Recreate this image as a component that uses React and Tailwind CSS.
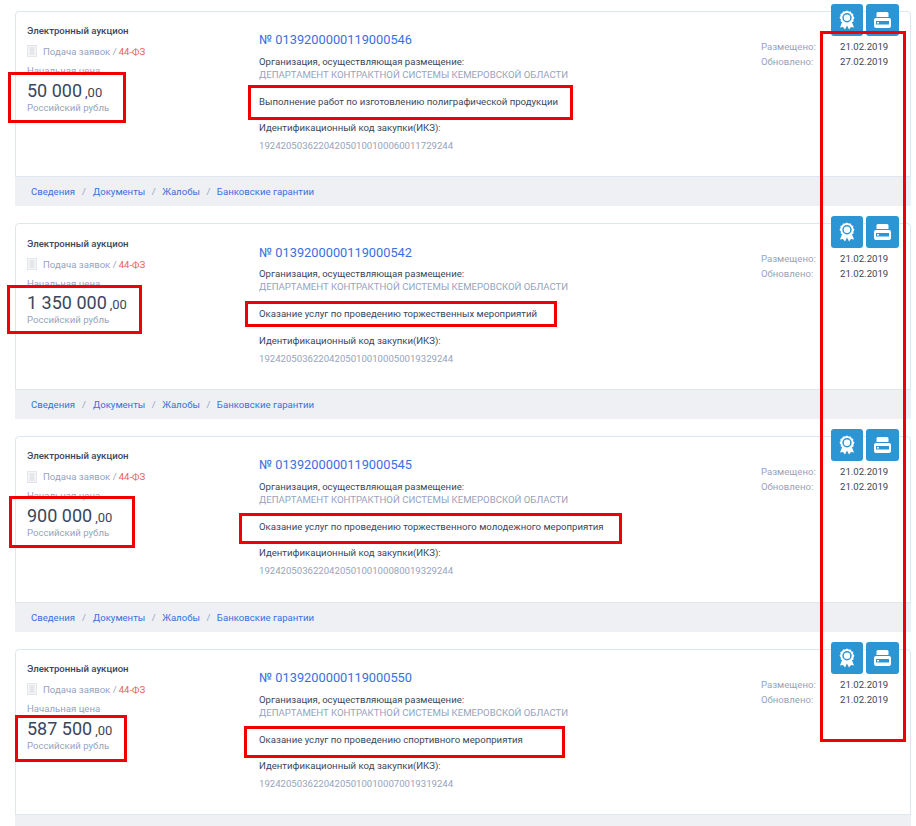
const cards = [
  { num: "0139200000119000546", price: "50 000", desc: "Выполнение работ по изготовлению полиграфической продукции", ikz: "192420503622042050100100060011729244", upd: "27.02.2019" },
  { num: "0139200000119000542", price: "1 350 000", desc: "Оказание услуг по проведению торжественных мероприятий", ikz: "192420503622042050100100050019329244", upd: "21.02.2019" },
  { num: "0139200000119000545", price: "900 000", desc: "Оказание услуг по проведению торжественного молодежного мероприятия", ikz: "192420503622042050100100080019329244", upd: "21.02.2019" },
  { num: "0139200000119000550", price: "587 500", desc: "Оказание услуг по проведению спортивного мероприятия", ikz: "192420503622042050100100070019319244", upd: "21.02.2019" },
];

const marks = [
  "left-[8px] top-[72px] w-[118px] h-[51px]",
  "left-[248px] top-[85px] w-[325px] h-[35px]",
  "left-[7px] top-[285px] w-[135px] h-[49px]",
  "left-[245px] top-[301px] w-[312px] h-[26px]",
  "left-[9px] top-[496px] w-[126px] h-[52px]",
  "left-[239px] top-[513px] w-[383px] h-[31px]",
  "left-[15px] top-[715px] w-[112px] h-[47px]",
  "left-[244px] top-[726px] w-[321px] h-[32px]",
  "left-[820px] top-[31px] w-[86px] h-[711px]",
];

function Award() {
  return (
    <svg width="16" height="20" viewBox="0 0 16 20" fill="none">
      <path d="M3.500 11 1 17.500l3-.4L6 19.500 8 15.500l2 4 2-2.400 3 .4L12.500 11z" fill="white" />
      <path d="M8 .5l1.700 1.100 2-.2.800 1.800 1.800.8-.2 2L15.500 7.700l-1.100 1.700.2 2-1.800.8-.8 1.800-2-.2L8 14.900l-1.700-1.100-2 .2-.8-1.800-1.800-.8.2-2L.5 7.700l1.100-1.700-.2-2 1.800-.8.800-1.800 2 .2z" fill="white" />
      <circle cx="8" cy="7.700" r="4.700" fill="#2b96d3" />
      <circle cx="8" cy="7.700" r="3.200" fill="white" />
    </svg>
  );
}

function Printer() {
  return (
    <svg width="17" height="16" viewBox="0 0 17 16" fill="white">
      <path d="M4 0h9a1.500 1.500 0 0 1 1.500 1.500V5h-12V1.500A1.500 1.500 0 0 1 4 0z" />
      <path fillRule="evenodd" d="M2 6h13a2 2 0 0 1 2 2v6a2 2 0 0 1-2 2H2a2 2 0 0 1-2-2V8a2 2 0 0 1 2-2zM2 9v3.500h13V9z" />
      <rect x="3" y="10" width="2" height="1.500" />
    </svg>
  );
}

function Doc() {
  return (
    <svg width="10" height="12" viewBox="0 0 10 12" fill="none">
      <rect x="0.500" y="0.500" width="9" height="11" fill="#f5f6f7" stroke="#e3e6ea" />
      <path d="M2.500 3h5M2.500 5h5M2.500 7h5M2.500 9h5" stroke="#d5d8dc" />
    </svg>
  );
}

function Card({ c }) {
  return (
    <div className="relative h-[195.67px] mb-[17px] bg-white border border-[#dfe6ef] rounded-t-[4px] flex flex-col">
      <div className="absolute right-[11px] top-[-8px] flex gap-[3px]">
        <div className="w-[32px] h-[32px] rounded-[3px] bg-[#2b96d3] flex items-center justify-center"><Award /></div>
        <div className="w-[33px] h-[32px] rounded-[3px] bg-[#2b96d3] flex items-center justify-center"><Printer /></div>
      </div>
      <div className="flex-1 flex min-h-0">
        <div className="w-[243px] shrink-0 pl-[11px] pt-[12.4px]">
          <div className="text-[9.6px] leading-[13px] font-medium text-[#3a465c]">Электронный аукцион</div>
          <div className="mt-[8px] flex items-center text-[9.6px] leading-[13px] text-[#97a3bb]">
            <Doc />
            <span className="ml-[6px]">Подача заявок / </span>
            <span className="ml-[2px] text-[#ea5f53]">44-ФЗ</span>
          </div>
          <div className="mt-[6px] text-[9.6px] leading-[13px] text-[#97a3bb]">Начальная цена</div>
          <div className="text-[#3a465c] leading-[22px] mt-[2.6px]">
            <span className="text-[18px]">{c.price}</span>
            <span className="text-[13px] ml-[3px]">,00</span>
          </div>
          <div className="mt-[-3px] text-[9.6px] leading-[13px] text-[#97a3bb]">Российский рубль</div>
        </div>
        <div className="flex-1 pt-[19.4px]">
          <div className="text-[12.8px] leading-[18px] text-[#3a6fe0]">№ {c.num}</div>
          <div className="mt-[5.6px] text-[9.6px] leading-[13px] text-[#3a465c]">Организация, осуществляющая размещение:</div>
          <div className="text-[9.6px] leading-[13px] text-[#97a3bb] whitespace-nowrap">ДЕПАРТАМЕНТ КОНТРАКТНОЙ СИСТЕМЫ КЕМЕРОВСКОЙ ОБЛАСТИ</div>
          <div className="mt-[14px] text-[9.6px] leading-[13px] text-[#3a465c] whitespace-nowrap">{c.desc}</div>
          <div className="mt-[13.4px] text-[9.6px] leading-[13px] text-[#3a465c]">Идентификационный код закупки(ИКЗ):</div>
          <div className="mt-[5px] text-[9.6px] leading-[13px] text-[#97a3bb]">{c.ikz}</div>
        </div>
        <div className="w-[149px] shrink-0 pt-[27px] text-[9.6px] leading-[15px]">
          <div className="flex"><span className="w-[79px] text-[#97a3bb]">Размещено:</span><span className="text-[#3a465c]">21.02.2019</span></div>
          <div className="flex"><span className="w-[79px] text-[#97a3bb]">Обновлено:</span><span className="text-[#3a465c]">{c.upd}</span></div>
        </div>
      </div>
      <div className="h-[30px] -mx-px mb-[-1px] pt-[1.4px] bg-[#eef0f3] border-t border-[#dfe6ef] pl-[16px] flex items-center text-[9.6px] leading-[12px] text-[#3a6fe0]">
        <span>Сведения</span>
        <span className="mx-[7px] text-[#97a3bb]">/</span>
        <span>Документы</span>
        <span className="mx-[6.5px] text-[#97a3bb]">/</span>
        <span>Жалобы</span>
        <span className="mx-[6.5px] text-[#97a3bb]">/</span>
        <span>Банковские гарантии</span>
      </div>
    </div>
  );
}

export default function App() {
  return (
    <div className="relative w-[916px] h-[826px] overflow-hidden bg-white pl-[15px] pr-[5px] pt-[10.6px] font-['Roboto',sans-serif]">
      {cards.map((c) => <Card key={c.num} c={c} />)}
      {marks.map((m) => <div key={m} className={"absolute border-[3px] border-[#f00000] " + m} />)}
    </div>
  );
}
